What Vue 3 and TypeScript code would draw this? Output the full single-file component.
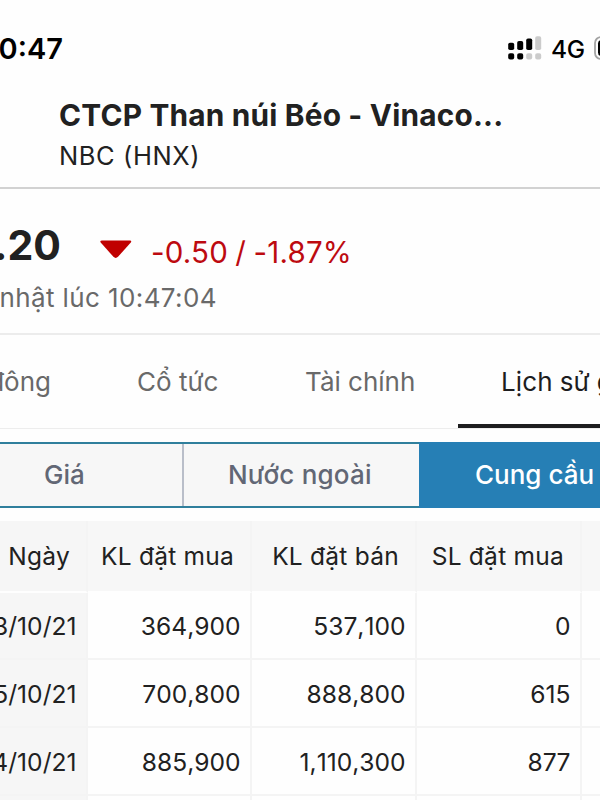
<script setup lang="ts">
interface Row {
  date: string
  values: string[]
}

const tabs = [
  { key: 'holders', label: 'Cổ đông', active: false },
  { key: 'dividend', label: 'Cổ tức', active: false },
  { key: 'finance', label: 'Tài chính', active: false },
  { key: 'history', label: 'Lịch sử giá', active: true },
]

const segments = [
  { key: 'spot', label: 'Giá', active: false },
  { key: 'foreign', label: 'Nước ngoài', active: false },
  { key: 'supply', label: 'Cung cầu', active: true },
]

const headers = [
  { key: 'bid', label: 'KL đặt mua' },
  { key: 'ask', label: 'KL đặt bán' },
  { key: 'orders', label: 'SL đặt mua' },
]

const rows: Row[] = [
  { date: '18/10/21', values: ['364,900', '537,100', '0'] },
  { date: '15/10/21', values: ['700,800', '888,800', '615'] },
  { date: '14/10/21', values: ['885,900', '1,110,300', '877'] },
]
</script>

<template>
  <main class="screen">
    <div class="status">
      <span class="clock">10:47</span>
      <div class="status-right">
        <svg class="signal" width="34" height="24" viewBox="0 0 34 24">
          <g fill="#000">
            <rect x="0.2" y="6.7" width="6" height="7.3" rx="1.8" />
            <rect x="9.2" y="5" width="6" height="9" rx="1.8" />
            <rect x="18.2" y="2.5" width="6" height="11.5" rx="1.8" />
            <rect x="0.2" y="17.2" width="6" height="6.2" rx="1.9" />
            <rect x="9.2" y="17.2" width="6" height="6.2" rx="1.9" />
          </g>
          <g fill="#cbcbcb">
            <rect x="27.2" y="0.2" width="6" height="13.8" rx="1.8" />
            <rect x="18.2" y="17.2" width="6" height="6.2" rx="1.9" />
            <rect x="27.2" y="17.2" width="6" height="6.2" rx="1.9" />
          </g>
        </svg>
        <span class="network">4G</span>
        <svg class="battery" width="44" height="24" viewBox="0 0 44 24">
          <rect x="1" y="1" width="42" height="22" rx="6" fill="none" stroke="#a3a3a3" stroke-width="1.8" />
          <rect x="4" y="4" width="34" height="16" rx="3.5" fill="#000" />
        </svg>
      </div>
    </div>

    <header class="title">
      <h1>CTCP Than núi Béo - Vinaco...</h1>
      <p>NBC (HNX)</p>
    </header>

    <section class="quote">
      <div class="quote-line">
        <span class="price">26.20</span>
        <svg class="arrow" width="32" height="19" viewBox="0 0 32 19">
          <path d="M2 0.5H30Q32 0.8 30.8 2.4L18 16.8Q15.7 19 13.4 16.8L0.7 2.4Q-0.5 0.8 2 0.5Z" fill="#c00000" />
        </svg>
        <span class="change">-0.50 / -1.87%</span>
      </div>
      <div class="updated"><span>Cập nhật lúc 10:47:04</span></div>
    </section>

    <nav class="tabs">
      <div v-for="t in tabs" :key="t.key" class="tab" :class="[t.key, { active: t.active }]">
        <span>{{ t.label }}</span>
      </div>
    </nav>

    <div class="segments">
      <div v-for="s in segments" :key="s.key" class="segment" :class="[s.key, { active: s.active }]">
        <span>{{ s.label }}</span>
      </div>
    </div>

    <div class="table">
      <div class="row head">
        <div class="cell date"><span>Ngày</span></div>
        <div v-for="h in headers" :key="h.key" class="cell" :class="h.key"><span>{{ h.label }}</span></div>
        <div class="cell"></div>
      </div>
      <div v-for="r in rows" :key="r.date" class="row">
        <div class="cell date"><span>{{ r.date }}</span></div>
        <div v-for="(v, i) in r.values" :key="i" class="cell"><span>{{ v }}</span></div>
        <div class="cell"></div>
      </div>
      <div class="row">
        <div class="cell date"></div>
        <div v-for="n in 4" :key="n" class="cell"></div>
      </div>
    </div>
  </main>
</template>

<style>
html,
body {
  background: #fefefe;
  overflow: hidden;
}
</style>

<style scoped>
.screen {
  width: 600px;
  height: 800px;
  overflow: hidden;
  background: #fefefe;
  color: #212121;
  font-family: Inter, "Liberation Sans", sans-serif;
  display: flex;
  flex-direction: column;
  white-space: nowrap;
}
.screen > * {
  flex: none;
}
.status {
  height: 96px;
  display: flex;
  justify-content: space-between;
  color: #000;
}
.clock {
  width: 63px;
  display: flex;
  justify-content: flex-end;
  font-size: 29px;
  font-weight: 600;
  line-height: 40px;
  padding-top: 29px;
}
.status-right {
  width: 92px;
  display: flex;
  align-items: flex-start;
  padding-top: 36px;
}
.signal,
.battery,
.arrow {
  flex: none;
  display: block;
}
.network {
  width: 43px;
  flex: none;
  padding-left: 9px;
  font-size: 24.5px;
  font-weight: 500;
  line-height: 27px;
  letter-spacing: -0.3px;
}
.title {
  height: 93px;
  box-sizing: border-box;
  padding-left: 59px;
  border-bottom: 2px solid #d2d2d2;
}
h1 {
  margin: 0;
  font-size: 29.8px;
  line-height: 38px;
  font-weight: 700;
  letter-spacing: 0.2px;
}
p {
  margin: 3px 0 0;
  font-size: 25.5px;
  line-height: 38px;
  font-weight: 400;
  letter-spacing: 0.6px;
}
.quote {
  height: 146px;
  box-sizing: border-box;
  border-bottom: 2px solid #ececec;
  padding-top: 30px;
}
.quote-line {
  display: flex;
  height: 60px;
}
.price {
  width: 61px;
  flex: none;
  display: flex;
  justify-content: flex-end;
  font-size: 41px;
  font-weight: 700;
  line-height: 53px;
}
.arrow {
  margin: 21px 19px 0 39px;
}
.change {
  color: #bd0a10;
  font-size: 29.5px;
  line-height: 67px;
  word-spacing: -1.2px;
  letter-spacing: 0.2px;
}
.updated {
  width: 217px;
  display: flex;
  justify-content: flex-end;
  color: #696969;
  font-size: 26px;
  line-height: 38px;
  letter-spacing: 0.4px;
}
.tabs {
  height: 94px;
  box-sizing: border-box;
  border-bottom: 1px solid #ededed;
  display: flex;
  color: #696969;
  font-size: 26px;
  line-height: 94px;
}
.tab {
  flex: none;
  box-sizing: border-box;
  height: 93px;
}
.tab.holders {
  width: 51px;
  display: flex;
  justify-content: flex-end;
}
.tab.dividend {
  width: 211px;
  padding-left: 86px;
}
.tab.finance {
  width: 196px;
  padding-left: 43px;
}
.tab.history {
  width: 230px;
  padding-left: 43px;
  letter-spacing: 0.1px;
  word-spacing: -0.4px;
}
.tab.active {
  color: #1d1d1f;
  border-bottom: 4px solid #1d1d1f;
}
.segments {
  margin-top: 13px;
  height: 66px;
  box-sizing: border-box;
  border: solid #2f7f9c;
  border-width: 2px 0;
  background: #f7f7f7;
  display: flex;
  color: #626775;
  font-size: 26px;
  font-weight: 500;
  line-height: 62px;
}
.segment {
  flex: none;
  box-sizing: border-box;
}
.segment.spot {
  width: 184px;
  padding-left: 44px;
  border-right: 2px solid #b9bec9;
}
.segment.foreign {
  width: 235px;
  padding-left: 44px;
  letter-spacing: 0.2px;
}
.segment.supply {
  width: 236px;
  margin: -2px 0;
  padding: 2px 0 0 56px;
  background: #267fb5;
  color: #fff;
}
.table {
  margin-top: 13px;
  font-size: 24.6px;
  font-kerning: none;
}
.row {
  display: grid;
  grid-template-columns: 88px 164px 165px 165px 165px;
  height: 68px;
}
.row.head {
  height: 72px;
  background: #f7f7f7;
  font-size: 24.5px;
  letter-spacing: 0.25px;
  font-kerning: normal;
}
.row.head + .row {
  height: 67px;
}
.cell {
  box-sizing: border-box;
  border-right: 2px solid #f4f4f4;
  border-bottom: 2px solid #f4f4f4;
  display: flex;
  justify-content: flex-end;
  align-items: center;
  padding: 1px 9.5px 0 0;
  overflow: hidden;
}
.cell.date {
  background: #f6f6f6;
}
.head .cell {
  padding: 0 16px 0 0;
  border-bottom-color: #fefefe;
}
</style>
